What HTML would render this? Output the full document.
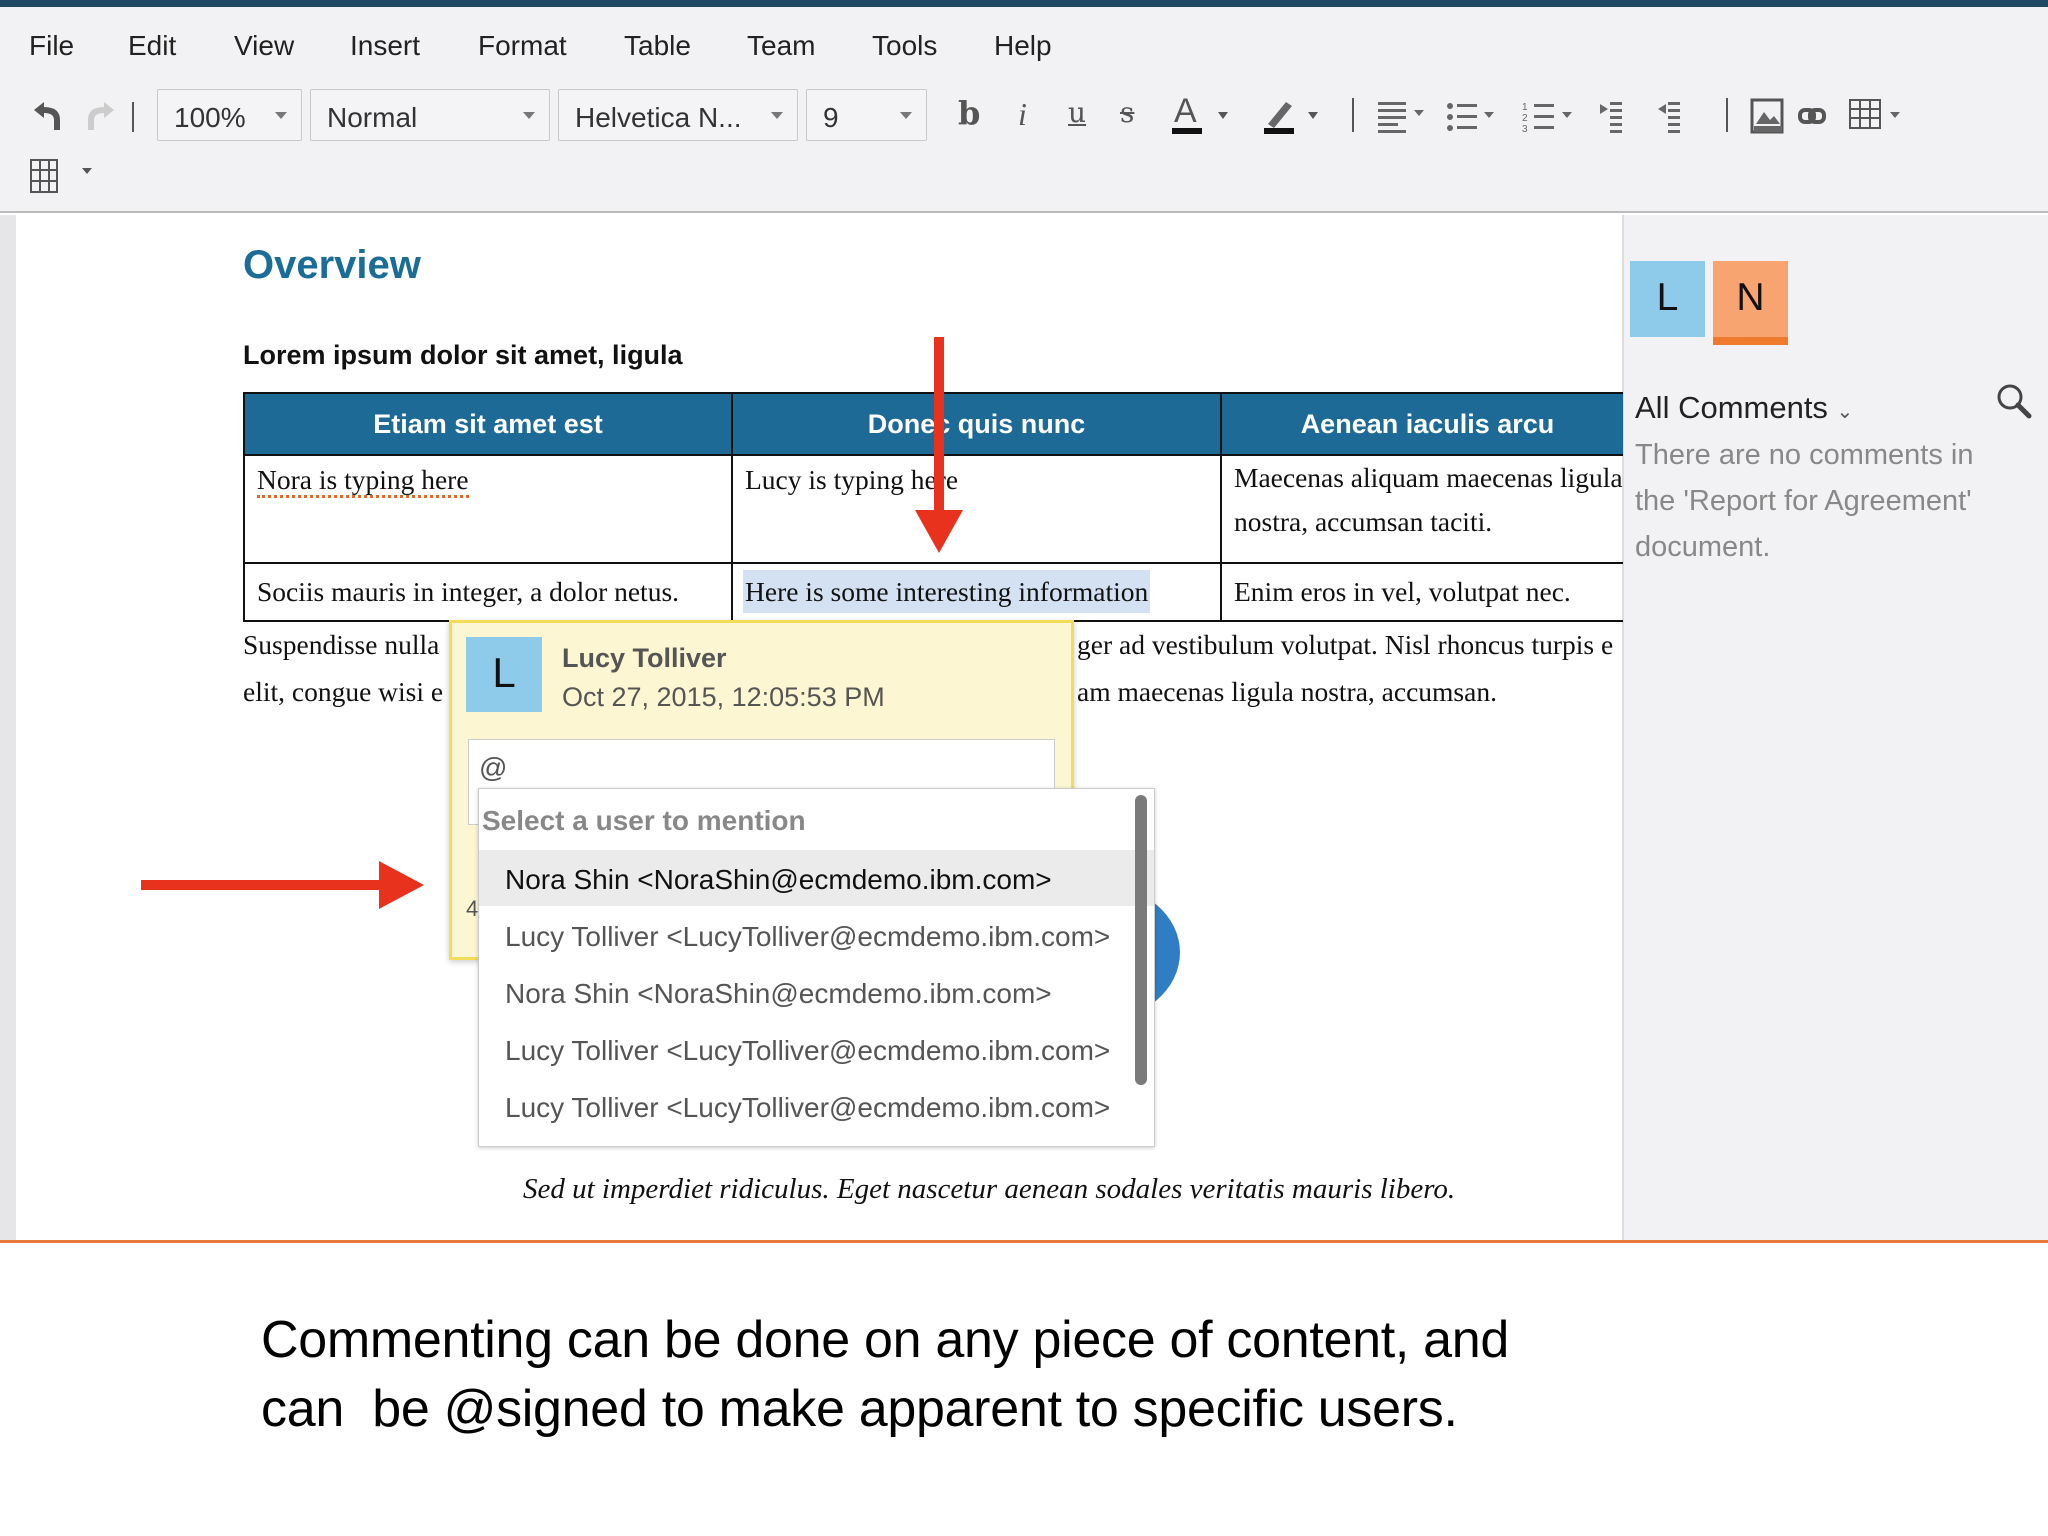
<!DOCTYPE html>
<html><head><meta charset="utf-8"><style>
*{margin:0;padding:0;box-sizing:border-box}
body{width:2048px;height:1536px;position:relative;background:#fff;font-family:"Liberation Sans",sans-serif;overflow:hidden}
.a{position:absolute;white-space:nowrap}
.menu{font-size:28px;color:#222;top:30px}
.dd{position:absolute;top:89px;height:52px;border:1px solid #c8c8c8;background:#f4f4f6;font-size:28px;color:#333;padding:12px 0 0 16px;border-radius:2px}
.dd:after{content:"";position:absolute;right:14px;top:22px;border:6px solid transparent;border-top:7px solid #777}
.ic{position:absolute;top:96px;font-size:32px;color:#555}
.car{position:absolute;border:5px solid transparent;border-top:7px solid #555}
.serif{font-family:"Liberation Serif",serif;font-size:27.5px;color:#111}
th,td{border:2px solid #111}
.mi{position:absolute;left:0;width:100%;height:56px;font-size:28px;color:#555;padding:14px 0 0 26px}
</style></head><body>
<div class="a" style="left:0;top:0;width:2048px;height:7px;background:#1f4a63"></div>
<div class="a" style="left:0;top:7px;width:2048px;height:206px;background:#f2f2f4;border-bottom:2px solid #bbb"></div>
<div class="a menu" style="left:29px">File</div>
<div class="a menu" style="left:128px">Edit</div>
<div class="a menu" style="left:234px">View</div>
<div class="a menu" style="left:350px">Insert</div>
<div class="a menu" style="left:478px">Format</div>
<div class="a menu" style="left:624px">Table</div>
<div class="a menu" style="left:747px">Team</div>
<div class="a menu" style="left:872px">Tools</div>
<div class="a menu" style="left:994px">Help</div>
<svg class="a" style="left:28px;top:98px" width="110" height="36"><path d="M6 12 L16 4 L16 9 Q32 9 32 22 L32 32 L26 32 L26 22 Q26 15 16 15 L16 20 Z" fill="#555"/><path d="M86 12 L76 4 L76 9 Q60 9 60 22 L60 32 L66 32 L66 22 Q66 15 76 15 L76 20 Z" fill="#ccc"/><rect x="104" y="4" width="2" height="30" fill="#555"/></svg>
<div class="dd" style="left:157px;width:145px">100%</div>
<div class="dd" style="left:310px;width:240px">Normal</div>
<div class="dd" style="left:558px;width:240px">Helvetica N...</div>
<div class="dd" style="left:806px;width:121px">9</div>
<div class="ic" style="left:958px;font-weight:bold;font-family:'DejaVu Serif',serif;top:94px">b</div>
<div class="ic" style="left:1018px;font-style:italic;font-family:'Liberation Serif',serif">i</div>
<div class="ic" style="left:1068px;text-decoration:underline;font-family:'DejaVu Serif',serif;font-size:28px">u</div>
<div class="ic" style="left:1120px;text-decoration:line-through;font-family:'DejaVu Serif',serif;font-size:28px">s</div>
<div class="ic" style="left:1174px;font-size:34px;top:92px">A</div>
<div class="a" style="left:1172px;top:128px;width:30px;height:6px;background:#111"></div>
<div class="car" style="left:1218px;top:112px"></div>
<svg class="a" style="left:1262px;top:98px" width="36" height="38"><path d="M6 26 L24 4 L30 8 L12 30 Z" fill="#666"/><rect x="2" y="30" width="30" height="6" fill="#111"/></svg>
<div class="car" style="left:1308px;top:112px"></div>
<div class="a" style="left:1352px;top:98px;width:2px;height:34px;background:#555"></div>
<svg class="a" style="left:1378px;top:98px" width="560" height="38"><g fill="#666">
<rect x="0" y="4" width="28" height="3"/><rect x="0" y="11" width="28" height="3"/><rect x="0" y="18" width="28" height="3"/><rect x="0" y="25" width="20" height="3"/><rect x="0" y="32" width="28" height="3"/>
<path d="M36 12 l10 0 -5 6z"/>
<circle cx="72" cy="8" r="3"/><circle cx="72" cy="19" r="3"/><circle cx="72" cy="30" r="3"/><rect x="79" y="6" width="20" height="3"/><rect x="79" y="17" width="20" height="3"/><rect x="79" y="28" width="20" height="3"/>
<path d="M106 14 l10 0 -5 6z"/>
<rect x="156" y="6" width="20" height="3"/><rect x="156" y="17" width="20" height="3"/><rect x="156" y="28" width="20" height="3"/>
<text x="144" y="12" font-size="10" font-family="Liberation Sans">1</text><text x="144" y="23" font-size="10" font-family="Liberation Sans">2</text><text x="144" y="34" font-size="10" font-family="Liberation Sans">3</text>
<path d="M184 14 l10 0 -5 6z"/>
<path d="M222 6 l8 5 -8 5z"/><rect x="232" y="4" width="12" height="3"/><rect x="232" y="11" width="12" height="3"/><rect x="232" y="18" width="12" height="3"/><rect x="232" y="25" width="12" height="3"/><rect x="232" y="32" width="12" height="3"/>
<path d="M288 6 l-8 5 8 5z"/><rect x="290" y="4" width="12" height="3"/><rect x="290" y="11" width="12" height="3"/><rect x="290" y="18" width="12" height="3"/><rect x="290" y="25" width="12" height="3"/><rect x="290" y="32" width="12" height="3"/>
<rect x="348" y="0" width="2" height="34" fill="#555"/>
<rect x="374" y="2" width="30" height="32" fill="none" stroke="#555" stroke-width="3"/><path d="M378 26 l8 -12 6 8 4 -4 6 8z"/><rect x="376" y="28" width="28" height="6"/>
<rect x="422" y="12" width="14" height="12" rx="5" fill="none" stroke="#555" stroke-width="4"/><rect x="432" y="12" width="14" height="12" rx="5" fill="none" stroke="#555" stroke-width="4"/>
<rect x="472" y="2" width="30" height="28" fill="none" stroke="#555" stroke-width="2"/><path d="M472 11h30M472 20h30M482 2v28M492 2v28" stroke="#555" stroke-width="2"/>
<path d="M512 14 l10 0 -5 6z"/></g></svg>
<svg class="a" style="left:30px;top:156px" width="70" height="40"><g stroke="#555" stroke-width="2" fill="none"><rect x="1" y="4" width="26" height="32"/><path d="M1 14h26M1 25h26M10 4v32M19 4v32"/></g><path d="M52 12 l10 0 -5 6z" fill="#555"/></svg>
<div class="a" style="left:0;top:215px;width:16px;height:1026px;background:#e6e6e8"></div>
<div class="a" style="left:1622px;top:215px;width:426px;height:1026px;background:#f2f2f4;border-left:2px solid #ddd"></div>
<div class="a" style="left:0;top:1240px;width:2048px;height:3px;background:#e8793a"></div>
<div class="a" style="left:243px;top:243px;font-size:40px;font-weight:bold;color:#1a6d96">Overview</div>
<div class="a" style="left:243px;top:340px;font-size:27px;font-weight:bold;color:#111">Lorem ipsum dolor sit amet, ligula</div>
<div class="a" style="left:243px;top:392px;width:1380px;height:230px;overflow:hidden">
<table style="width:1392px;border-collapse:collapse;table-layout:fixed">
<tr style="height:62px;background:#1c6a95;color:#fff;font-size:27px;font-weight:bold;text-align:center"><th style="width:488px">Etiam sit amet est</th><th style="width:489px">Donec quis nunc</th><th>Aenean iaculis arcu</th></tr>
<tr style="height:108px;vertical-align:top" class="serif"><td style="padding:8px 12px"><span style="border-bottom:3px dotted #e06a2a">Nora is typing here</span></td><td style="padding:8px 12px">Lucy is typing here</td><td style="padding:0 12px;line-height:44px;white-space:nowrap;overflow:hidden">Maecenas aliquam maecenas ligula<br>nostra, accumsan taciti.</td></tr>
<tr style="height:58px" class="serif"><td style="padding:0 12px">Sociis mauris in integer, a dolor netus.</td><td style="padding:0 10px"><span style="background:#d3e1f2;padding:6px 2px">Here is some interesting information</span></td><td style="padding:0 12px">Enim eros in vel, volutpat nec.</td></tr>
</table></div>
<div class="a serif" style="left:243px;top:629px">Suspendisse nulla</div>
<div class="a serif" style="left:243px;top:676px">elit, congue wisi e</div>
<div class="a serif" style="left:1077px;top:629px;width:545px;overflow:hidden">ger ad vestibulum volutpat. Nisl rhoncus turpis e</div>
<div class="a serif" style="left:1077px;top:676px">am maecenas ligula nostra, accumsan.</div>
<div class="a serif" style="left:523px;top:1173px;font-style:italic;font-size:29px">Sed ut imperdiet ridiculus. Eget nascetur aenean sodales veritatis mauris libero.</div>
<div class="a" style="left:1020px;top:885px;width:160px;height:135px;border-radius:50%;background:#2f7dc4"></div>
<div class="a" style="left:449px;top:620px;width:625px;height:340px;background:#fdf6d2;border:3px solid #f3dc5a;box-shadow:0 2px 6px rgba(0,0,0,.2)"></div>
<div class="a" style="left:466px;top:637px;width:76px;height:75px;background:#8ecbea;font-size:42px;color:#111;text-align:center;padding-top:12px">L</div>
<div class="a" style="left:562px;top:643px;font-size:27px;font-weight:bold;color:#555">Lucy Tolliver</div>
<div class="a" style="left:562px;top:682px;font-size:27px;color:#555">Oct 27, 2015, 12:05:53 PM</div>
<div class="a" style="left:468px;top:739px;width:587px;height:86px;background:#fff;border:1px solid #ccc;font-size:28px;color:#555;padding:12px 10px">@</div>
<div class="a" style="left:466px;top:896px;font-size:22px;color:#555">4</div>
<div class="a" style="left:478px;top:788px;width:677px;height:359px;background:#fff;border:1px solid #ccc;box-shadow:0 1px 4px rgba(0,0,0,.2)">
<div class="a" style="left:3px;top:16px;font-size:28px;color:#888;font-weight:bold">Select a user to mention</div>
<div class="mi" style="top:61px;background:#ebebeb;color:#111">Nora Shin &lt;NoraShin@ecmdemo.ibm.com&gt;</div>
<div class="mi" style="top:118px">Lucy Tolliver &lt;LucyTolliver@ecmdemo.ibm.com&gt;</div>
<div class="mi" style="top:175px">Nora Shin &lt;NoraShin@ecmdemo.ibm.com&gt;</div>
<div class="mi" style="top:232px">Lucy Tolliver &lt;LucyTolliver@ecmdemo.ibm.com&gt;</div>
<div class="mi" style="top:289px">Lucy Tolliver &lt;LucyTolliver@ecmdemo.ibm.com&gt;</div>
<div class="a" style="left:656px;top:6px;width:12px;height:290px;background:#7a7a7a;border-radius:6px"></div>
</div>
<svg class="a" style="left:0;top:0" width="2048" height="1240"><g fill="#e8321e"><rect x="934" y="337" width="10" height="180"/><path d="M915 510 L963 510 L939 553 Z"/><rect x="141" y="880" width="245" height="10"/><path d="M379 861 L379 909 L424 885 Z"/></g></svg>
<div class="a" style="left:1630px;top:261px;width:75px;height:76px;background:#8ecbea;font-size:39px;color:#111;text-align:center;padding-top:15px">L</div>
<div class="a" style="left:1713px;top:261px;width:75px;height:76px;background:#f7a470;font-size:39px;color:#111;text-align:center;padding-top:15px">N</div>
<div class="a" style="left:1713px;top:337px;width:75px;height:8px;background:#ef7a2e"></div>
<div class="a" style="left:1635px;top:390px;font-size:31px;color:#222">All Comments <span style="font-size:20px;color:#555">&#8964;</span></div>
<svg class="a" style="left:1994px;top:381px" width="40" height="40"><circle cx="16" cy="16" r="11" fill="none" stroke="#444" stroke-width="3"/><path d="M24 24 L35 35" stroke="#444" stroke-width="5" stroke-linecap="round"/></svg>
<div class="a" style="left:1635px;top:432px;font-size:29px;color:#888;line-height:46px">There are no comments in<br>the 'Report for Agreement'<br>document.</div>
<div class="a" style="left:261px;top:1306px;font-size:52px;color:#000;line-height:69px;letter-spacing:-0.3px">Commenting can be done on any piece of content, and<br>can&nbsp; be @signed to make apparent to specific users.</div>
</body></html>
